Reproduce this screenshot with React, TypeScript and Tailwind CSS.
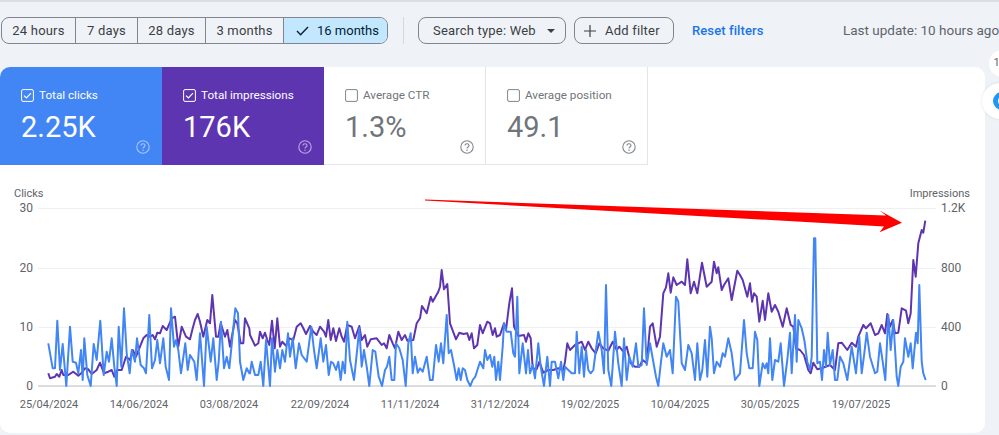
import React from "react";

const blue: [number, string][] = [
  [0, "145,490 158,565 165,565 172,422 180,570 188,492 199,618 210,440 218,545 228,548 235,580 243,510 248,600 253,475 262,585 272,618 281,492 290,540 301,422 311,585 320,515 327,545 335,475 343,560 350,618 356,440 364,560 372,385 380,520 389,580 395,510 405,545 411,475 422,555 432,565 438,580 448,405 456,565 465,540 472,480 480,550 490,475 497,560 507,600 513,385 522,500 528,480 535,510 543,580 556,490 563,570 570,525 583,545 590,600 600,460 612,618 620,440 632,545 640,475 650,600 656,545 663,425 672,565 680,530 688,565 706,385 714,400 720,545 730,600 740,565 748,580"],
  [250, "0,580 5,545 15,585 25,585 32,545 40,618 48,480 60,618 66,475 75,575 82,510 90,565 97,510 105,545 114,460 120,530 128,475 137,565 147,490 155,525 170,545 184,440 192,510 200,565 212,475 220,545 228,495 236,585 243,545 250,550 258,570 265,545 272,600 278,545 285,580 292,425 300,540 312,600 322,505 328,445 335,560 342,510 350,560 358,618 368,510 376,515 386,590 396,618 405,570 411,560 418,530 425,600 433,600 438,490 448,505 458,540 467,618 475,490 482,460 488,580 495,530 503,578 510,565 518,575 530,530 540,600 548,600 558,495 566,545 573,490 580,550 590,405 596,520 603,510 612,555 620,600 626,565 632,600 638,565 645,570 652,600 661,618 668,600 676,590 690,545 700,565 705,510 712,540 720,525 727,560 733,530 738,600 745,545"],
  [500, "0,600 8,500 12,430 20,455 32,455 40,520 45,530 52,350 58,580 68,490 78,580 84,510 90,580 98,555 105,595 115,490 122,560 132,618 142,530 150,618 155,545 165,545 175,595 183,545 190,600 195,560 205,570 215,580 225,580 230,455 238,580 245,500 252,590 258,510 265,570 272,580 280,570 295,455 305,510 312,580 318,315 325,570 334,618 345,455 355,550 365,618 372,475 380,600 388,530 398,560 408,490 415,560 425,555 432,385 440,555 450,490 460,545 468,590 475,618 483,545 490,490 500,530 510,510 518,580 528,350 535,365 545,550 555,570 565,495 575,520 585,600 592,490 600,600 607,570 615,480 622,590 630,440 635,475 642,580 650,545 660,560 668,520 675,530 685,475 695,520 705,600"],
  [740, "0,580 12,420 20,520 28,565 38,565 45,455 52,480 58,618 68,550 75,565 80,550 85,580 90,475 97,600 105,540 115,545 122,490 132,618 142,540 150,458 155,580 165,405 170,545 175,420 185,445 193,480 202,545 210,570 215,530 222,175 226,175 232,550 240,545 246,600 252,510 258,560 263,458 270,555 278,510 285,600 292,600 300,530 310,550 322,600 335,500 348,580 358,470 365,580 373,520 380,458 390,530 405,580 412,575 420,490 428,545 436,600 445,405 452,510 460,420 470,590 475,618 482,560 490,545 495,475 505,530 512,490 518,565 528,458 533,490 538,315 545,545 550,580 557,600"],
];

const purple: [number, string][] = [
  [0, "145,580 150,595 165,590 170,582 178,590 185,570 190,585 205,585 220,575 235,587 245,578 255,565 265,568 275,582 290,570 300,548 312,580 325,575 335,570 343,590 352,570 365,570 378,530 390,540 398,510 408,530 418,505 430,475 440,465 450,470 458,465 465,478 472,458 480,460 488,438 500,450 515,415 525,410 535,500 545,440 558,470 570,478 578,445 585,420 593,402 600,425 610,470 622,420 630,430 637,345 648,470 655,470 662,430 675,470 682,450 690,500 705,420 712,430 722,490 730,490 735,415 748,445"],
  [250, "0,465 15,497 25,490 30,455 38,475 45,458 52,480 58,495 66,422 74,505 82,415 90,500 97,485 108,497 118,475 130,480 140,440 152,430 160,445 168,462 180,438 190,455 200,465 210,440 222,455 228,470 235,420 242,480 250,445 258,483 268,445 275,470 282,485 292,435 305,440 315,475 328,438 335,480 345,465 352,500 362,478 380,475 395,495 402,490 410,505 418,465 428,490 435,505 445,455 455,480 465,465 472,482 490,480 500,430 510,415 516,378 530,400 542,350 548,365 565,335 570,320 575,270 582,328 592,312 600,430 618,478 628,458 640,462 652,460 658,480 665,460 672,505 682,495 690,435 698,460 712,425 720,430 728,465 735,445 740,470"],
  [500, "0,465 12,430 18,450 28,370 36,325 42,440 55,468 72,465 78,485 85,460 92,475 98,565 110,568 118,545 130,578 145,570 160,570 175,565 190,570 195,545 202,490 210,510 225,495 245,485 255,510 265,485 275,505 287,520 298,490 310,505 325,512 338,485 350,510 358,500 370,515 380,500 392,550 405,560 418,560 428,540 440,550 450,440 458,430 470,500 480,470 490,340 498,322 505,280 512,338 520,292 530,315 545,305 555,315 562,238 572,340 582,305 592,340 606,248 620,320 635,305 642,245 650,280 655,262 665,330 672,315 685,295 695,360 712,272 720,285"],
  [740, "0,285 8,300 22,350 30,310 36,365 42,340 50,350 58,425 68,362 75,420 85,340 95,395 105,375 115,395 128,440 140,385 152,435 160,440 168,505 180,510 192,525 205,570 212,580 220,548 232,568 245,565 270,555 285,570 295,490 305,488 322,510 335,488 348,500 355,470 370,435 378,445 392,430 405,465 415,460 425,435 435,460 442,402 450,440 458,420 465,460 475,458 485,385 498,392 505,430 512,400 520,240 527,290 535,190 545,150 550,158 556,122"],
];

// Traced in 3x coordinates from y=180; the chart svg starts at page y=165.
const toPoints = (segs: [number, string][]) =>
  segs
    .flatMap(([ox, s]) =>
      s.split(" ").map((p) => {
        const [x, y] = p.split(",").map(Number);
        return `${(ox + x / 3).toFixed(1)},${(y / 3 + 15).toFixed(1)}`;
      })
    )
    .join(" ");

const ranges = [
  { label: "24 hours", w: "w-[74px]" },
  { label: "7 days", w: "w-[62px]" },
  { label: "28 days", w: "w-[68px]" },
  { label: "3 months", w: "w-[78px]" },
];

const dates: [number, string][] = [
  [49, "25/04/2024"],
  [139, "14/06/2024"],
  [229, "03/08/2024"],
  [320, "22/09/2024"],
  [410, "11/11/2024"],
  [500, "31/12/2024"],
  [590, "19/02/2025"],
  [680, "10/04/2025"],
  [770, "30/05/2025"],
  [861, "19/07/2025"],
];

function Help({ color, className }: { color: string; className: string }) {
  return (
    <svg width="14" height="14" viewBox="0 0 14 14" fill="none" className={`absolute ${className}`}>
      <circle cx="7" cy="7" r="6.2" stroke={color} strokeWidth="1.1" />
      <path d="M5 5.6c0-1.2.9-1.9 2-1.9s2 .7 2 1.8c0 1.5-2 1.5-2 3" stroke={color} strokeWidth="1.1" />
      <circle cx="7" cy="10.3" r=".75" fill={color} />
    </svg>
  );
}

function Box({ checked }: { checked: boolean }) {
  return (
    <svg width="13" height="13" viewBox="0 0 13 13" fill="none" className="shrink-0">
      <rect x=".6" y=".6" width="11.8" height="11.8" rx="1.4" stroke={checked ? "#ffffff" : "#80868b"} strokeWidth="1" />
      {checked && <path d="M3 6.6l2.4 2.4L10 4.2" stroke="#ffffff" strokeWidth="1.2" />}
    </svg>
  );
}

function Tile({
  label,
  value,
  checked,
  className,
  labelClass,
  valueClass,
  help,
  helpClass,
}: {
  label: string;
  value: string;
  checked: boolean;
  className: string;
  labelClass: string;
  valueClass: string;
  help: string;
  helpClass: string;
}) {
  return (
    <div className={`relative w-[162px] h-[98px] pl-[21px] pt-[22px] ${className}`}>
      <div className={`flex items-center gap-[5px] h-[13px] text-[11.7px] ${labelClass}`}>
        <Box checked={checked} />
        <span>{label}</span>
      </div>
      <div className={`mt-[7px] text-[29px] leading-[36px] ${valueClass}`}>{value}</div>
      <Help color={help} className={helpClass} />
    </div>
  );
}

export default function App() {
  return (
    <div
      className="w-[999px] h-[435px] overflow-hidden relative bg-[#eff3f8] border-t-2 border-[#dcdee0]"
      style={{ fontFamily: "Roboto, 'Liberation Sans', sans-serif" }}
    >
      <div className="flex items-center h-[27px] mt-[15px] pl-[1px] text-[13px] text-[#3c4043] whitespace-nowrap">
        <div className="flex shrink-0 h-[27px] rounded-[8px] border border-[#80868b] overflow-hidden">
          {ranges.map((r) => (
            <div key={r.label} className={`${r.w} shrink-0 flex items-center justify-center border-r border-[#80868b] tracking-[0.2px]`}>
              {r.label}
            </div>
          ))}
          <div className="w-[103px] shrink-0 flex items-center pl-[12px] gap-[8px] bg-[#c2e7ff] text-[#001d35]">
            <svg width="13" height="10" viewBox="0 0 13 10" fill="none">
              <path d="M1 5l3.6 3.8L12 1" stroke="#0b1f33" strokeWidth="1.4" />
            </svg>
            16 months
          </div>
        </div>
        <div className="w-px shrink-0 h-[27px] bg-[#d5d9dd] ml-[15px] mr-[14px]" />
        <div className="flex shrink-0 items-center h-[27px] w-[148px] pl-[14px] rounded-[8px] border border-[#80868b] tracking-[0.2px]">
          Search type: Web
          <span className="ml-[11px] border-x-[4px] border-x-transparent border-t-[4px] border-t-[#3c4043]" />
        </div>
        <div className="flex shrink-0 items-center h-[27px] w-[100px] ml-[8px] pl-[9px] gap-[9px] rounded-[8px] border border-[#80868b] tracking-[0.2px]">
          <svg width="12" height="12" viewBox="0 0 12 12" fill="none">
            <path d="M6 0v12M0 6h12" stroke="#3c4043" strokeWidth="1.2" />
          </svg>
          Add filter
        </div>
        <div className="ml-[18px] w-[71px] shrink-0 font-medium text-[#1a73e8] text-[13px] tracking-[0.1px]">Reset filters</div>
        <div className="ml-[80px] shrink-0 text-[13.5px] text-[#5f6368]">Last update: 10 hours ago</div>
      </div>

      <div className="mt-[23px] w-[985px] h-[366px] rounded-[10px] bg-white overflow-hidden relative">
        <div className="flex">
          <Tile label="Total clicks" value="2.25K" checked className="bg-[#4285f4]" labelClass="text-white" valueClass="text-white" help="#a9c8fa" helpClass="right-[12px] bottom-[11px]" />
          <Tile label="Total impressions" value="176K" checked className="bg-[#5e35b1]" labelClass="text-white" valueClass="text-white" help="#bba8e0" helpClass="right-[12px] bottom-[11px]" />
          <Tile label="Average CTR" value="1.3%" checked={false} className="border-r border-b border-[#e3e5e8]" labelClass="text-[#70757a]" valueClass="text-[#70757a]" help="#80868b" helpClass="right-[11px] bottom-[10px]" />
          <Tile label="Average position" value="49.1" checked={false} className="border-r border-b border-[#e3e5e8]" labelClass="text-[#70757a]" valueClass="text-[#70757a]" help="#80868b" helpClass="right-[11px] bottom-[10px]" />
        </div>

        <svg width="985" height="269" viewBox="0 0 985 269" className="block" style={{ fontFamily: "Roboto, 'Liberation Sans', sans-serif" }}>
          <g fill="#5f6368" fontSize="11">
            <text x="14" y="32">Clicks</text>
            <text x="970" y="32" textAnchor="end">Impressions</text>
          </g>
          <g stroke="#f0f0f0" strokeWidth="1">
            <line x1="38" x2="936" y1="43.5" y2="43.5" />
            <line x1="38" x2="936" y1="103.5" y2="103.5" />
            <line x1="38" x2="936" y1="162.5" y2="162.5" />
          </g>
          <line x1="38" x2="936" y1="221" y2="221" stroke="#b8babd" strokeWidth="1.2" />
          <g fill="#5f6368" fontSize="12" textAnchor="end">
            <text x="33" y="47">30</text>
            <text x="33" y="107">20</text>
            <text x="33" y="166">10</text>
            <text x="33" y="225">0</text>
          </g>
          <g fill="#5f6368" fontSize="12">
            <text x="941" y="47">1.2K</text>
            <text x="941" y="107">800</text>
            <text x="941" y="166">400</text>
            <text x="941" y="225">0</text>
          </g>
          <g fill="#5f6368" fontSize="11" textAnchor="middle">
            {dates.map(([x, d]) => (
              <text key={d} x={x} y="243">{d}</text>
            ))}
          </g>
          <polyline points={toPoints(purple)} fill="none" stroke="#5e35b1" strokeWidth="2" strokeLinejoin="round" />
          <polyline points={toPoints(blue)} fill="none" stroke="#4285f4" strokeWidth="2" strokeLinejoin="round" />
          <polygon
            points="425,34.5 886,50.5 880,45.7 902,57.7 879.5,67.3 884,61.5 425,35.5"
            fill="#ff0000"
          />
        </svg>
      </div>

      <div className="absolute left-[989px] top-[48px] w-[27px] h-[27px] rounded-full bg-white flex items-center justify-center">
        <span className="text-[11px] text-[#5f6368] -translate-x-[6px]">1</span>
      </div>
      <div className="absolute left-[982px] top-[81px] w-[36px] h-[36px] rounded-full bg-white shadow-[0_0_3px_rgba(0,0,0,0.12)] flex items-center justify-center">
        <span className="w-[18px] h-[18px] translate-x-[2px] rounded-full border-[5px] border-[#2196f3] bg-white" />
      </div>
    </div>
  );
}
